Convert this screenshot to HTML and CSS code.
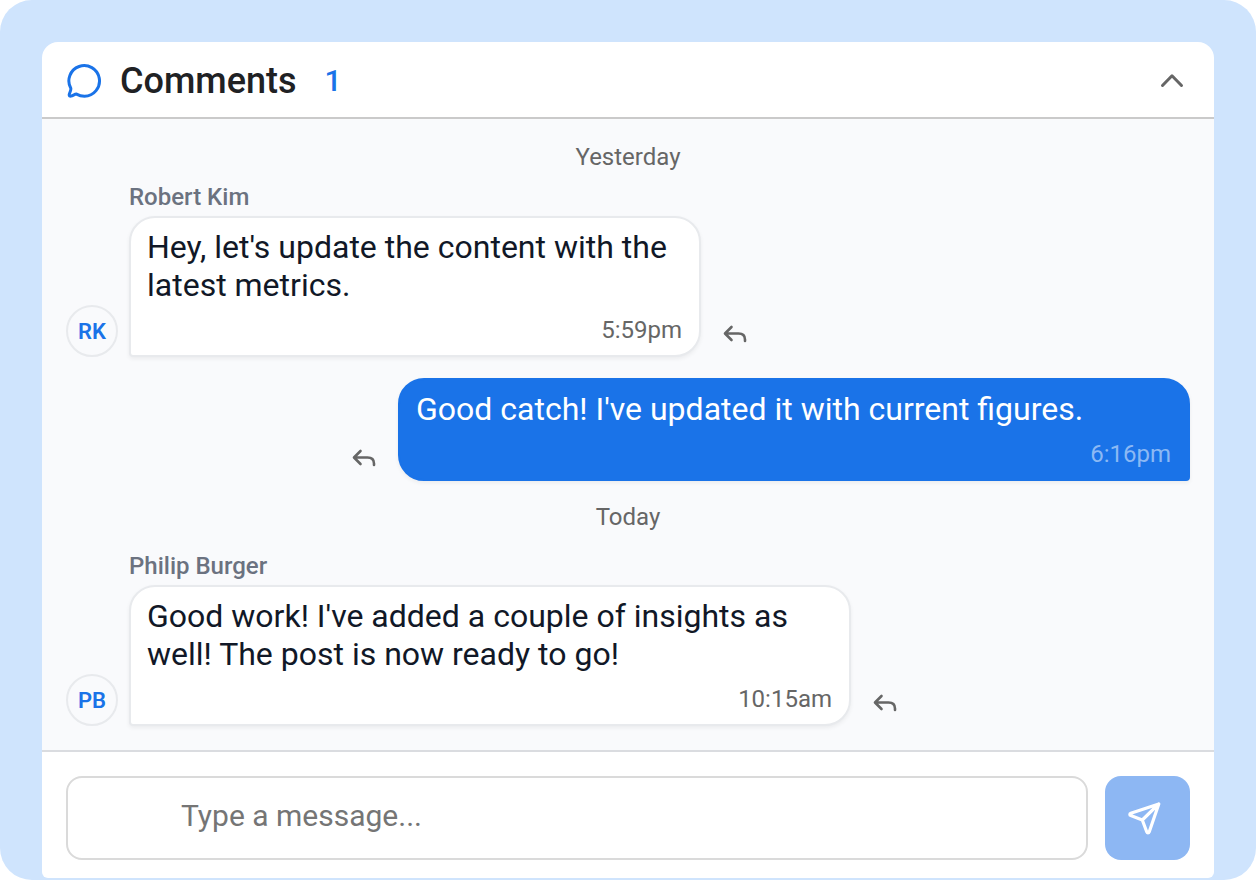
FILE: index.html
```html
<!DOCTYPE html>
<html lang="en">
<head>
<meta charset="utf-8">
<meta name="viewport" content="width=device-width, initial-scale=1">
<title>Comments</title>
<link rel="stylesheet" href="styles.css">
</head>
<body>
<svg class="sprite" aria-hidden="true">
  <symbol id="reply" viewBox="0 0 24 20">
    <path d="M8.500 2 2 8.500l6.500 6.500M3 8.500h12.500c4 0 6.500 2.300 6.500 6v1.500"/>
  </symbol>
</svg>
<main class="stage">
  <section class="panel" aria-label="Comments">
    <header class="panel-header">
      <svg class="icon-chat" viewBox="0 0 36 36" aria-hidden="true">
        <path d="M10.500 31.100C13 32.500 15.500 33.200 18.500 33.200A15.300 15.300 0 1 0 4.800 25.300C5.300 27.200 3.500 29.500 3.200 31.800 3.100 32.900 3.800 33.300 5 33.100 7 32.700 8.500 31.200 10.500 31.100Z"/>
      </svg>
      <h1 class="panel-title">Comments</h1>
      <span class="panel-count">1</span>
      <button class="icon-button collapse" type="button" aria-label="Collapse comments">
        <svg class="icon-chevron" viewBox="0 0 24 16" aria-hidden="true"><path d="M2.500 12.500 12 2.800 21.500 12.500"/></svg>
      </button>
    </header>

    <div class="thread">
      <p class="day">Yesterday</p>
      <article class="message">
        <h2 class="author">Robert Kim</h2>
        <div class="message-row">
          <span class="avatar">RK</span>
          <div class="bubble bubble-short">
            <p class="text">Hey, let's update the content with the latest metrics.</p>
            <time class="time">5:59pm</time>
          </div>
          <button class="icon-button reply" type="button" aria-label="Reply"><svg class="icon-reply" aria-hidden="true"><use href="#reply"/></svg></button>
        </div>
      </article>
      <article class="message own">
        <div class="message-row">
          <button class="icon-button reply" type="button" aria-label="Reply"><svg class="icon-reply" aria-hidden="true"><use href="#reply"/></svg></button>
          <div class="bubble bubble-own">
            <p class="text">Good catch! I've updated it with current figures.</p>
            <time class="time">6:16pm</time>
          </div>
        </div>
      </article>
      <p class="day">Today</p>
      <article class="message">
        <h2 class="author">Philip Burger</h2>
        <div class="message-row">
          <span class="avatar">PB</span>
          <div class="bubble bubble-long">
            <p class="text">Good work! I've added a couple of insights as well! The post is now ready to go!</p>
            <time class="time">10:15am</time>
          </div>
          <button class="icon-button reply" type="button" aria-label="Reply"><svg class="icon-reply" aria-hidden="true"><use href="#reply"/></svg></button>
        </div>
      </article>
    </div>

    <form class="composer">
      <input class="composer-input" type="text" placeholder="Type a message..." aria-label="Type a message">
      <button class="send" type="button" aria-label="Send">
        <svg class="icon-send" viewBox="0 0 36 36" aria-hidden="true"><path d="M31.800 3.900 3.800 13.200C2.500 13.700 2.500 15.100 3.800 15.600L15.300 20 19.800 32C20.300 33.300 21.700 33.300 22.200 32ZM31.800 3.900 15.300 20"/></svg>
      </button>
    </form>
  </section>
</main>
</body>
</html>
```
FILE: styles.css
```css
* { box-sizing: border-box; }

body {
  margin: 0;
  background: #fff;
  font-family: Roboto, "Liberation Sans", sans-serif;
}

h1, h2, p { margin: 0; font-weight: 400; }
svg { display: block; fill: none; stroke: currentColor; stroke-linecap: round; stroke-linejoin: round; }
.sprite { display: none; }

.stage {
  display: flex;
  min-height: 100vh;
  padding: 42px 42px 2px;
  border-radius: 32px;
  background: #cfe4fd;
}

.panel {
  display: flex;
  flex: 1;
  flex-direction: column;
  overflow: hidden;
  border-radius: 16px 16px 6px 6px;
  background: #fff;
}

.panel-header {
  display: flex;
  align-items: center;
  padding: 17px 24px 14px;
  border-bottom: 2px solid #cacaca;
}
.icon-chat { width: 36px; height: 36px; color: #1a73e8; stroke-width: 3; }
.panel-title {
  margin-left: 18px;
  color: #202124;
  font-size: 36px;
  font-weight: 500;
  line-height: 44px;
}
.panel-count {
  margin-left: 28px;
  color: #1a73e8;
  font-size: 30px;
  font-weight: 500;
  line-height: 44px;
}

.icon-button {
  padding: 0;
  border: 0;
  background: none;
  color: #666;
}
.collapse { margin-left: auto; padding-right: 6px; }
.icon-chevron { width: 24px; height: 16px; stroke-width: 3; }

.thread {
  flex: 1;
  padding: 22px 24px 3px;
  background: #f9fafc;
}
.day {
  color: #666;
  font-size: 24px;
  line-height: 32px;
  text-align: center;
}
.author {
  padding-left: 63px;
  color: #6b7280;
  font-size: 24px;
  font-weight: 500;
  line-height: 32px;
}
.message { display: flex; flex-direction: column; gap: 3px; padding: 8px 0 21px; }
.own { padding: 0 0 20px; }
.own + .day + .message { padding-top: 17px; }
.message-row { display: flex; align-items: flex-end; }
.own .message-row { justify-content: flex-end; }

.avatar {
  display: flex;
  flex: none;
  align-items: center;
  justify-content: center;
  width: 52px;
  height: 52px;
  margin-right: 11px;
  border: 2px solid #e8eaed;
  border-radius: 50%;
  color: #1a73e8;
  font-size: 22px;
  font-weight: 600;
}

.bubble {
  display: flex;
  flex-direction: column;
  gap: 10px;
  padding: 10px 17px 9px 16px;
  border: 2px solid #e8eaed;
  border-radius: 26px 26px 26px 4px;
  background: #fff;
  box-shadow: 0 2px 4px rgb(0 0 0 / 6%);
  color: #111827;
}
.bubble-short { width: 572px; }
.bubble-long { width: 722px; }
.bubble-own {
  width: 792px;
  border-color: #1a73e8;
  border-radius: 26px 26px 4px 26px;
  background: #1a73e8;
  color: #fff;
}
.text { font-size: 32px; line-height: 38px; }
.time { align-self: flex-end; color: #666; font-size: 24px; line-height: 32px; }
.bubble-own .time { color: #8cb9f4; }

.reply { margin: 0 22px 12px; }
.icon-reply { width: 24px; height: 20px; stroke-width: 2.600; }

.composer {
  display: flex;
  gap: 17px;
  padding: 24px 24px 18px;
  border-top: 2px solid #dadce0;
}
.composer-input {
  flex: 1;
  min-width: 0;
  height: 84px;
  padding: 0 113px 5px;
  border: 2px solid #dadada;
  border-radius: 16px;
  background: #fff;
  color: #202124;
  font: 400 30px Roboto, "Liberation Sans", sans-serif;
}
.composer-input::placeholder { color: #757575; opacity: 1; }
.send {
  display: grid;
  place-items: center;
  width: 85px;
  height: 84px;
  padding: 0 6px 0 0;
  border: 0;
  border-radius: 16px;
  background: #8db7f3;
  color: #fff;
}
.icon-send { width: 36px; height: 36px; stroke-width: 3.200; }
```
